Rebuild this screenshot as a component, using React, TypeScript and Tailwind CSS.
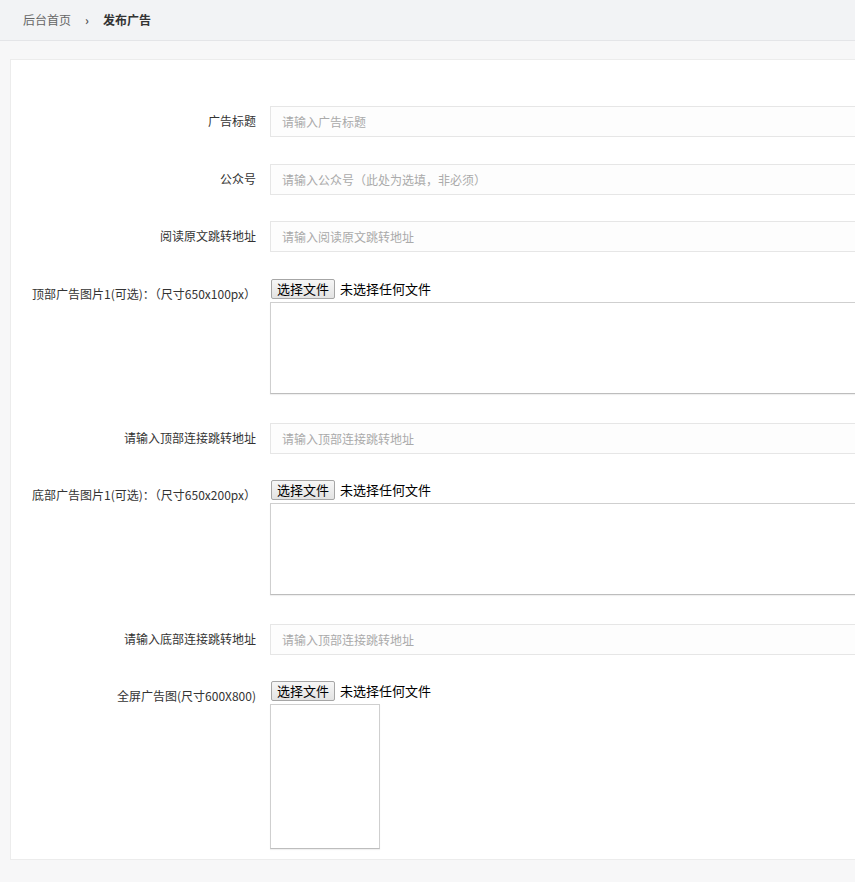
import React from "react";

const font = { fontFamily: '"Noto Sans CJK SC", "Noto Sans", sans-serif' };

function InputRow({ label, placeholder, mb }: { label: string; placeholder: string; mb: string }) {
  return (
    <div className={`flex ${mb}`}>
      <div className="w-[245px] shrink-0 pt-[8px] text-right text-[12px] leading-[14px] text-[#333] whitespace-nowrap">
        {label}
      </div>
      <div className="ml-[14px] flex-1">
        <div className="h-[31px] border border-[#e6e6e6] bg-[#fdfdfd] pl-[11px] flex items-center text-[12px] text-[#aaa]">
          {placeholder}
        </div>
      </div>
    </div>
  );
}

function FileRow({ label, mb, boxClass }: { label: string; mb: string; boxClass: string }) {
  return (
    <div className={`flex ${mb}`}>
      <div className="w-[245px] shrink-0 pt-[8px] text-right text-[12px] leading-[14px] text-[#333] whitespace-nowrap">
        {label}
      </div>
      <div className="ml-[14px] flex-1">
        <div className="flex items-center h-[20px] leading-[18px]">
          <div className="ml-[1px] h-[20px] w-[64px] flex items-center justify-center rounded-[2px] border border-[#a6a6a6] bg-gradient-to-b from-[#f6f6f6] to-[#e3e3e3] text-[13px] text-black">
            选择文件
          </div>
          <span className="ml-[5px] text-[13px] text-black">未选择任何文件</span>
        </div>
        <div className={`mt-[3px] border border-[#cfcfcf] border-b-[#bdbdbd] bg-white shadow-[0_1px_1px_rgba(0,0,0,0.06)] ${boxClass}`} />
      </div>
    </div>
  );
}

export default function App() {
  return (
    <div className="w-[855px] h-[882px] overflow-hidden bg-[#f7f7f8]" style={font}>
      <div className="h-[41px] bg-[#f2f3f5] border-b border-[#e4e5e8] flex items-center pl-[23px] text-[12px]">
        <span className="text-[#666]">后台首页</span>
        <span className="ml-[14px] text-[#555] font-bold">›</span>
        <span className="ml-[14px] text-[#333] font-bold">发布广告</span>
      </div>
      <div className="pt-[18px] pl-[10px]">
        <div className="w-[900px] bg-white border border-[#ececec] pt-[46px] pb-[10px]">
          <InputRow label="广告标题" placeholder="请输入广告标题" mb="mb-[27px]" />
          <InputRow label="公众号" placeholder="请输入公众号（此处为选填，非必须）" mb="mb-[26px]" />
          <InputRow label="阅读原文跳转地址" placeholder="请输入阅读原文跳转地址" mb="mb-[27px]" />
          <FileRow label="顶部广告图片1(可选)：（尺寸650x100px）" mb="mb-[29px]" boxClass="h-[92px]" />
          <InputRow label="请输入顶部连接跳转地址" placeholder="请输入顶部连接跳转地址" mb="mb-[26px]" />
          <FileRow label="底部广告图片1(可选)：（尺寸650x200px）" mb="mb-[29px]" boxClass="h-[92px]" />
          <InputRow label="请输入底部连接跳转地址" placeholder="请输入顶部连接跳转地址" mb="mb-[26px]" />
          <FileRow label="全屏广告图(尺寸600X800)" mb="mb-0" boxClass="h-[145px] w-[110px]" />
        </div>
      </div>
    </div>
  );
}
